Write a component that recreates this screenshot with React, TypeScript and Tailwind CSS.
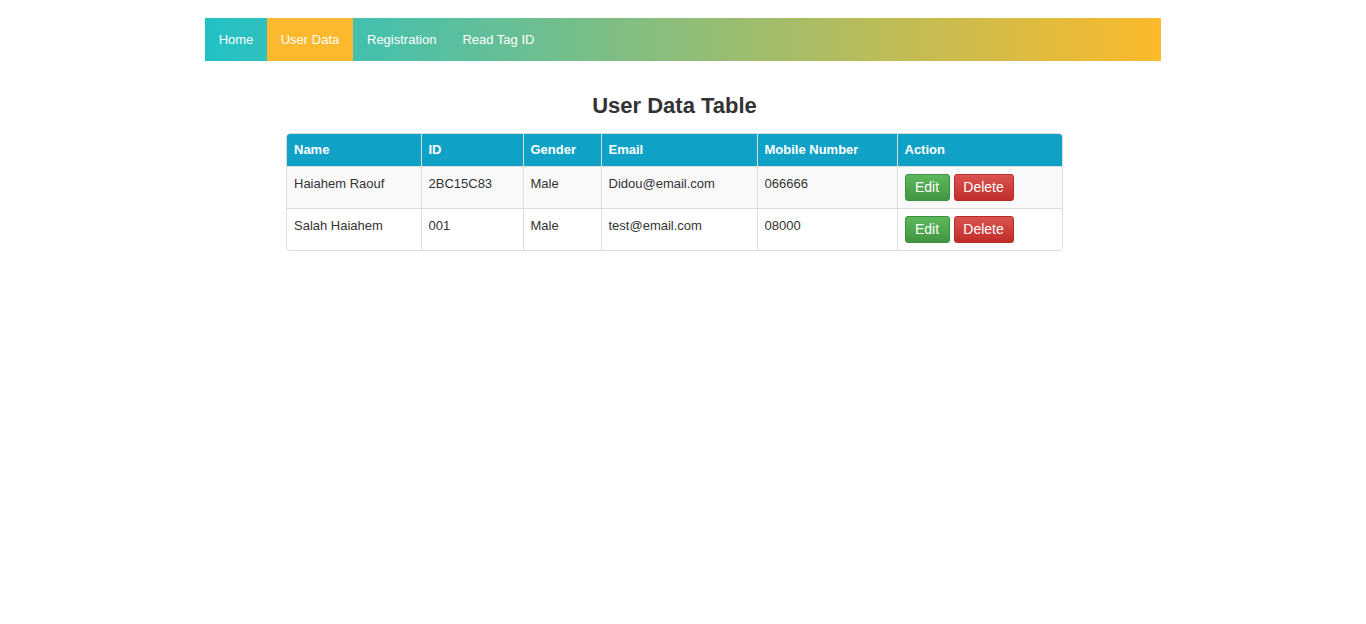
import React from "react";

const rows = [
  { name: "Haiahem Raouf", id: "2BC15C83", gender: "Male", email: "Didou@email.com", mobile: "066666" },
  { name: "Salah Haiahem", id: "001", gender: "Male", email: "test@email.com", mobile: "08000" },
];

export default function App() {
  return (
    <div className="min-h-[624px] bg-white text-[#333]" style={{ fontFamily: '"Liberation Sans", Arial, sans-serif' }}>
      <div className="w-[956px] mx-auto pt-[18px]">
        <nav className="h-[43px] flex bg-[linear-gradient(to_right,#21c1c7,#fbba2b)] text-white text-[13px]">
          <a className="w-[62px] flex items-center justify-center">Home</a>
          <a className="w-[86px] flex items-center justify-center bg-[#fdb92d]">User Data</a>
          <a className="pl-[14px] pr-[13px] flex items-center">Registration</a>
          <a className="px-[13px] flex items-center">Read Tag ID</a>
        </nav>
        <div className="ml-[81px] w-[777px]">
          <h3 className="text-center font-bold text-[22px] mt-[33px] leading-[24px]">User Data Table</h3>
          <div className="mt-[15px] border border-[#ddd] rounded-[4px] overflow-hidden">
            <table className="w-full border-collapse text-[13px]">
              <thead>
                <tr className="bg-[#10a1c6] text-white font-bold h-[32px]">
                  <th className="w-[134px] text-left px-[7px] border-r border-[#ddd]">Name</th>
                  <th className="w-[102px] text-left px-[7px] border-r border-[#ddd]">ID</th>
                  <th className="w-[78px] text-left px-[7px] border-r border-[#ddd]">Gender</th>
                  <th className="w-[156px] text-left px-[7px] border-r border-[#ddd]">Email</th>
                  <th className="w-[140px] text-left px-[7px] border-r border-[#ddd]">Mobile Number</th>
                  <th className="text-left px-[7px]">Action</th>
                </tr>
              </thead>
              <tbody>
                {rows.map((r, i) => (
                  <tr key={i} className={`${i === 0 ? "bg-[#f9f9f9]" : "bg-white"} border-t border-[#ddd] h-[42px] align-top`}>
                    <td className="px-[7px] pt-[7px] border-r border-[#ddd]">{r.name}</td>
                    <td className="px-[7px] pt-[7px] border-r border-[#ddd]">{r.id}</td>
                    <td className="px-[7px] pt-[7px] border-r border-[#ddd]">{r.gender}</td>
                    <td className="px-[7px] pt-[7px] border-r border-[#ddd]">{r.email}</td>
                    <td className="px-[7px] pt-[7px] border-r border-[#ddd]">{r.mobile}</td>
                    <td className="px-[7px] pt-[7px]">
                      <div className="flex gap-[4px]">
                        <button className="w-[45px] h-[27px] rounded-[3px] border border-[#3e8f3e] bg-[linear-gradient(to_bottom,#5cb85c,#419641)] text-white text-[14px] leading-none">Edit</button>
                        <button className="w-[60px] h-[27px] rounded-[3px] border border-[#b92c28] bg-[linear-gradient(to_bottom,#d9534f,#c12e2a)] text-white text-[14px] leading-none">Delete</button>
                      </div>
                    </td>
                  </tr>
                ))}
              </tbody>
            </table>
          </div>
        </div>
      </div>
    </div>
  );
}
